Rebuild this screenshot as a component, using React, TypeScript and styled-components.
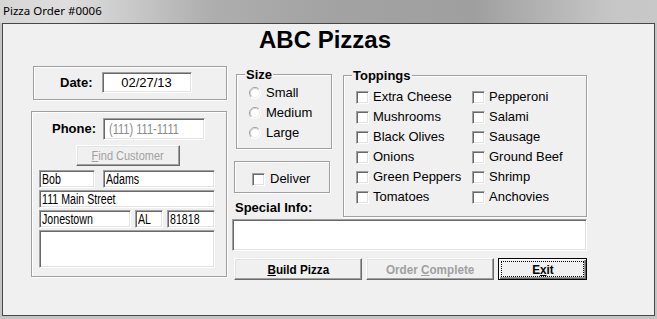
import React from "react";
import styled, { createGlobalStyle } from "styled-components";

const sans = `"Liberation Sans", Arial, sans-serif`;

const GlobalStyle = createGlobalStyle`
  html, body { margin: 0; padding: 0; background: #c4c4c4; }
  body { font-family: ${sans}; font-size: 13px; color: #000; }
  * { box-sizing: border-box; }
`;

const Window = styled.div`
  width: 657px;
  height: 319px;
  display: flex;
  flex-direction: column;
  background: #c4c4c4;
  overflow: hidden;
`;

const TitleBar = styled.div`
  height: 23px;
  flex: none;
  display: flex;
  align-items: center;
  padding-left: 3px;
  background: linear-gradient(
    90deg,
    #d6d6d6 0%,
    #dedede 10%,
    #c9c9c9 20%,
    #aeaeae 32%,
    #a3a3a3 50%,
    #9f9f9f 72%,
    #b9b9b9 86%,
    #c6c6c6 93%,
    #c8c8c8 100%
  );
`;

const TitleText = styled.span`
  font-family: "Noto Sans", "Open Sans", sans-serif;
  font-size: 11.5px;
  line-height: 16px;
  color: #000;
  margin-top: -1px;
`;

const Frame = styled.div`
  flex: 1;
  padding: 0 2px 3px 2px;
  display: flex;
`;

const Client = styled.div`
  width: 653px;
  height: 293px;
  border: 1px solid #474747;
  background: #f0f0f0;
  display: flex;
  flex-direction: column;
`;

const Heading = styled.h1`
  margin: 0;
  padding: 2px 7px 0 0;
  font-family: ${sans};
  font-size: 24px;
  line-height: 28px;
  font-weight: bold;
  text-align: center;
`;

const Body = styled.div`
  display: flex;
  align-items: flex-start;
  margin-top: 12px;
  padding-left: 28px;
`;

const LeftCol = styled.div`
  width: 196px;
  display: flex;
  flex-direction: column;
  align-items: flex-start;
`;

const etched = `
  border: 1px solid #a0a0a0;
  box-shadow: 1px 1px 0 #fff, inset 1px 1px 0 #fff;
`;

/* condensed text (the form's fields and buttons use a narrow face) */
const Cond = styled.span<{ $sx: number; $origin?: string }>`
  display: inline-block;
  white-space: nowrap;
  transform: scaleX(${(p) => p.$sx});
  transform-origin: ${(p) => p.$origin ?? "left"} center;
`;

const DateBox = styled.div`
  ${etched}
  margin-left: 2px;
  width: 194px;
  height: 34px;
  display: flex;
  align-items: flex-start;
  gap: 9px;
  padding: 5px 0 0 26px;
`;

const Label = styled.span<{ $lh: number }>`
  font-family: ${sans};
  font-weight: bold;
  font-size: 13px;
  line-height: ${(p) => p.$lh}px;
  white-space: nowrap;
`;

const sunken = `
  background: #fff;
  border: 1px solid;
  border-color: #a0a0a0 #fff #fff #a0a0a0;
  box-shadow: inset 1px 1px 0 #696969, inset -1px -1px 0 #e3e3e3;
`;

const DateField = styled.div`
  ${sunken}
  width: 90px;
  height: 21px;
  padding: 1px;
  font-family: ${sans};
  font-size: 13px;
  line-height: 17px;
  text-align: center;
`;

const CustomerBox = styled.div`
  ${etched}
  margin-top: 11px;
  width: 196px;
  height: 166px;
  display: flex;
  flex-direction: column;
  align-items: flex-start;
  padding-top: 6px;
`;

const PhoneRow = styled.div`
  display: flex;
  align-items: flex-start;
  gap: 7px;
  margin-left: 20px;
`;

const PhoneField = styled.div`
  ${sunken}
  width: 102px;
  height: 22px;
  padding: 1px 1px 1px 5px;
  font-family: ${sans};
  font-size: 14px;
  line-height: 18px;
  color: #8a8a8a;
  overflow: hidden;
`;

const Button = styled.button<{ $w: number; $h: number; $default?: boolean }>`
  width: ${(p) => p.$w}px;
  height: ${(p) => p.$h}px;
  margin: 0;
  padding: 0;
  background: #f0f0f0;
  border: 1px solid;
  border-color: #fff #696969 #696969 #fff;
  box-shadow: inset -1px -1px 0 #a0a0a0, inset 1px 1px 0 #e3e3e3;
  font-family: ${sans};
  color: #000;
  text-align: center;
  white-space: nowrap;
  overflow: hidden;
  cursor: default;
  &:disabled {
    color: #a0a0a0;
  }
  ${(p) =>
    p.$default
      ? `
    border-color: #000;
    box-shadow: inset 1px 1px 0 #fff, inset -1px -1px 0 #696969, inset -2px -2px 0 #a0a0a0;
    outline: 1px dotted #000;
    outline-offset: -4px;
  `
      : ""}
`;

const FindButton = styled(Button)`
  margin: 5px 0 0 44px;
  font-size: 13px;
  line-height: 19px;
`;

const ActionButton = styled(Button)`
  font-size: 13px;
  font-weight: bold;
  line-height: 19px;
`;

const Mn = styled.span`
  text-decoration: underline;
`;

const FieldRow = styled.div<{ $gap: number; $mt: number }>`
  display: flex;
  gap: ${(p) => p.$gap}px;
  margin: ${(p) => p.$mt}px 0 0 7px;
`;

const Field = styled.div<{ $w: number }>`
  ${sunken}
  width: ${(p) => p.$w}px;
  height: 18px;
  padding: 0 1px 0 2px;
  font-family: ${sans};
  font-size: 14px;
  line-height: 16px;
  white-space: nowrap;
  overflow: hidden;
`;

const Memo = styled.div`
  ${sunken}
  width: 176px;
  height: 38px;
  margin: 2px 0 0 7px;
`;

const MidCol = styled.div`
  margin-left: 5px;
  width: 355px;
  display: flex;
  flex-direction: column;
  align-items: flex-start;
`;

const TopRow = styled.div`
  display: flex;
  align-items: flex-start;
`;

const SubCol = styled.div`
  margin-left: 2px;
  width: 98px;
  display: flex;
  flex-direction: column;
  align-items: flex-start;
`;

const Group = styled.fieldset<{ $w: number; $mt: number; $ml: number }>`
  ${etched}
  margin: ${(p) => p.$mt}px 0 0 ${(p) => p.$ml}px;
  padding: 0;
  width: ${(p) => p.$w}px;
  min-inline-size: 0;
`;

const Legend = styled.legend`
  margin-left: 8px;
  padding: 0 1px;
  background: #f0f0f0;
  font-family: ${sans};
  font-weight: bold;
  font-size: 13px;
  line-height: 15px;
`;

const RadioList = styled.div`
  padding: 1px 0 5px 12px;
  display: flex;
  flex-direction: column;
`;

const OptionRow = styled.label<{ $h: number; $gap: number }>`
  display: flex;
  align-items: center;
  gap: ${(p) => p.$gap}px;
  height: ${(p) => p.$h}px;
  line-height: ${(p) => p.$h}px;
  font-family: ${sans};
  font-size: 13px;
  white-space: nowrap;
`;

const Check = styled.span`
  ${sunken}
  display: inline-block;
  flex: none;
  width: 13px;
  height: 13px;
`;

const RadioSvg = styled.svg`
  flex: none;
  display: block;
`;

const Radio = () => (
  <RadioSvg width="12" height="12" viewBox="0 0 12 12">
    <circle cx="6" cy="6" r="5.5" fill="#fff" />
    <path d="M2.11 9.89 A5.5 5.5 0 0 1 9.89 2.11" fill="none" stroke="#9c9c9c" strokeWidth="1" />
    <path d="M2.82 9.18 A4.5 4.5 0 0 1 9.18 2.82" fill="none" stroke="#cfcfcf" strokeWidth="1" />
    <path d="M9.89 2.11 A5.5 5.5 0 0 1 2.11 9.89" fill="none" stroke="#ffffff" strokeWidth="1" />
    <path d="M9.18 2.82 A4.5 4.5 0 0 1 2.82 9.18" fill="none" stroke="#ececec" strokeWidth="1" />
  </RadioSvg>
);

const DeliverBox = styled.div`
  ${etched}
  margin-top: 12px;
  width: 96px;
  height: 32px;
  padding: 8px 0 0 17px;
`;

const SectionLabel = styled.div`
  margin: 7px 0 0 1px;
  font-family: ${sans};
  font-weight: bold;
  font-size: 13px;
  line-height: 15px;
  white-space: nowrap;
`;

const ToppingsGrid = styled.div`
  display: grid;
  grid-template-columns: 116px auto;
  grid-auto-flow: column;
  grid-template-rows: repeat(6, 20px);
  padding: 4px 0 9px 12px;
`;

const SpecialField = styled.div`
  ${sunken}
  margin-top: 2px;
  width: 355px;
  height: 32px;
`;

const ButtonRow = styled.div`
  display: flex;
  gap: 4px;
  margin: 7px 0 0 2px;
`;

const sizes = ["Small", "Medium", "Large"];
const toppings = [
  "Extra Cheese",
  "Mushrooms",
  "Black Olives",
  "Onions",
  "Green Peppers",
  "Tomatoes",
  "Pepperoni",
  "Salami",
  "Sausage",
  "Ground Beef",
  "Shrimp",
  "Anchovies",
];

const FIELD_SX = 0.76;
const BTN_SX = 0.9;

export default function App() {
  return (
    <>
      <GlobalStyle />
      <Window>
        <TitleBar>
          <TitleText>Pizza Order #0006</TitleText>
        </TitleBar>
        <Frame>
          <Client>
            <Heading>ABC Pizzas</Heading>
            <Body>
              <LeftCol>
                <DateBox>
                  <Label $lh={21}>Date:</Label>
                  <DateField>02/27/13</DateField>
                </DateBox>
                <CustomerBox>
                  <PhoneRow>
                    <Label $lh={22}>Phone:</Label>
                    <PhoneField>
                      <Cond $sx={0.79}>(111) 111-1111</Cond>
                    </PhoneField>
                  </PhoneRow>
                  <FindButton $w={104} $h={21} disabled>
                    <Cond $sx={0.845} $origin="center">
                      <Mn>F</Mn>ind Customer
                    </Cond>
                  </FindButton>
                  <FieldRow $gap={8} $mt={4}>
                    <Field $w={56}>
                      <Cond $sx={FIELD_SX}>Bob</Cond>
                    </Field>
                    <Field $w={112}>
                      <Cond $sx={FIELD_SX}>Adams</Cond>
                    </Field>
                  </FieldRow>
                  <FieldRow $gap={0} $mt={2}>
                    <Field $w={176}>
                      <Cond $sx={FIELD_SX}>111 Main Street</Cond>
                    </Field>
                  </FieldRow>
                  <FieldRow $gap={4} $mt={2}>
                    <Field $w={92}>
                      <Cond $sx={FIELD_SX}>Jonestown</Cond>
                    </Field>
                    <Field $w={28}>
                      <Cond $sx={FIELD_SX}>AL</Cond>
                    </Field>
                    <Field $w={48}>
                      <Cond $sx={FIELD_SX}>81818</Cond>
                    </Field>
                  </FieldRow>
                  <Memo />
                </CustomerBox>
              </LeftCol>
              <MidCol>
                <TopRow>
                  <SubCol>
                    <Group $w={96} $mt={1} $ml={2}>
                      <Legend>Size</Legend>
                      <RadioList>
                        {sizes.map((s) => (
                          <OptionRow key={s} $h={20} $gap={5}>
                            <Radio />
                            {s}
                          </OptionRow>
                        ))}
                      </RadioList>
                    </Group>
                    <DeliverBox>
                      <OptionRow $h={18} $gap={5}>
                        <Check />
                        Deliver
                      </OptionRow>
                    </DeliverBox>
                    <SectionLabel>Special Info:</SectionLabel>
                  </SubCol>
                  <Group $w={244} $mt={2} $ml={11}>
                    <Legend>Toppings</Legend>
                    <ToppingsGrid>
                      {toppings.map((t) => (
                        <OptionRow key={t} $h={20} $gap={4}>
                          <Check />
                          {t}
                        </OptionRow>
                      ))}
                    </ToppingsGrid>
                  </Group>
                </TopRow>
                <SpecialField />
                <ButtonRow>
                  <ActionButton $w={128} $h={22}>
                    <Cond $sx={BTN_SX} $origin="center">
                      <Mn>B</Mn>uild Pizza
                    </Cond>
                  </ActionButton>
                  <ActionButton $w={128} $h={22} disabled>
                    <Cond $sx={BTN_SX} $origin="center">
                      Order <Mn>C</Mn>omplete
                    </Cond>
                  </ActionButton>
                  <ActionButton $w={89} $h={22} $default>
                    <Cond $sx={BTN_SX} $origin="center">
                      E<Mn>x</Mn>it
                    </Cond>
                  </ActionButton>
                </ButtonRow>
              </MidCol>
            </Body>
          </Client>
        </Frame>
      </Window>
    </>
  );
}
